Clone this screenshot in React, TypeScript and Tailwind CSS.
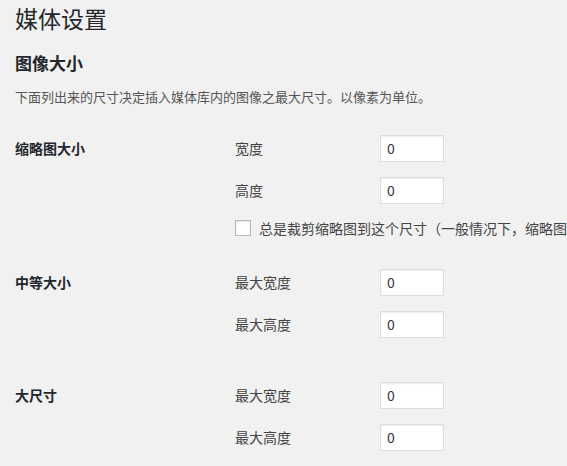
import React from "react";

const font = { fontFamily: '"Noto Sans CJK SC", "Noto Sans", sans-serif' };

function Field({ label }: { label: string }) {
  return (
    <div className="flex h-[42px] items-center">
      <span className="w-[145px] text-[14px] text-[#444]">{label}</span>
      <input
        type="text"
        defaultValue="0"
        readOnly
        className="h-[27px] w-[64px] border border-[#ddd] bg-white px-[6px] text-[14px] text-[#32373c] shadow-[inset_0_1px_2px_rgba(0,0,0,0.07)] outline-none"
        style={font}
      />
    </div>
  );
}

function Section({
  title,
  fields,
  className,
  children,
}: {
  title: string;
  fields: string[];
  className?: string;
  children?: React.ReactNode;
}) {
  return (
    <div className={"flex " + (className ?? "")}>
      <div className="flex h-[42px] w-[220px] shrink-0 items-center text-[14px] font-bold text-[#23282d]">
        {title}
      </div>
      <div className="flex flex-col">
        {fields.map((f) => (
          <Field key={f} label={f} />
        ))}
        {children}
      </div>
    </div>
  );
}

export default function App() {
  return (
    <div
      className="min-h-screen overflow-hidden bg-[#f1f1f1] pl-[15px] whitespace-nowrap"
      style={font}
    >
      <h1 className="pt-[4px] text-[23px] leading-[29px] font-normal text-[#23282d]">
        媒体设置
      </h1>
      <h2 className="mt-[18px] text-[17px] leading-[24px] font-bold text-[#23282d]">
        图像大小
      </h2>
      <p className="mt-[12px] text-[13px] leading-[20px] text-[#555]">
        下面列出来的尺寸决定插入媒体库内的图像之最大尺寸。以像素为单位。
      </p>
      <Section title="缩略图大小" fields={["宽度", "高度"]} className="mt-[20px]">
        <div className="flex h-[34px] items-center gap-[8px]">
          <span className="h-[16px] w-[16px] shrink-0 border border-[#b4b9be] bg-white shadow-[inset_0_1px_2px_rgba(0,0,0,0.1)]" />
          <span className="text-[14px] text-[#444]">
            总是裁剪缩略图到这个尺寸（一般情况下，缩略图应该是等比例缩放的）
          </span>
        </div>
      </Section>
      <Section title="中等大小" fields={["最大宽度", "最大高度"]} className="mt-[16px]" />
      <Section title="大尺寸" fields={["最大宽度", "最大高度"]} className="mt-[29px]" />
    </div>
  );
}
